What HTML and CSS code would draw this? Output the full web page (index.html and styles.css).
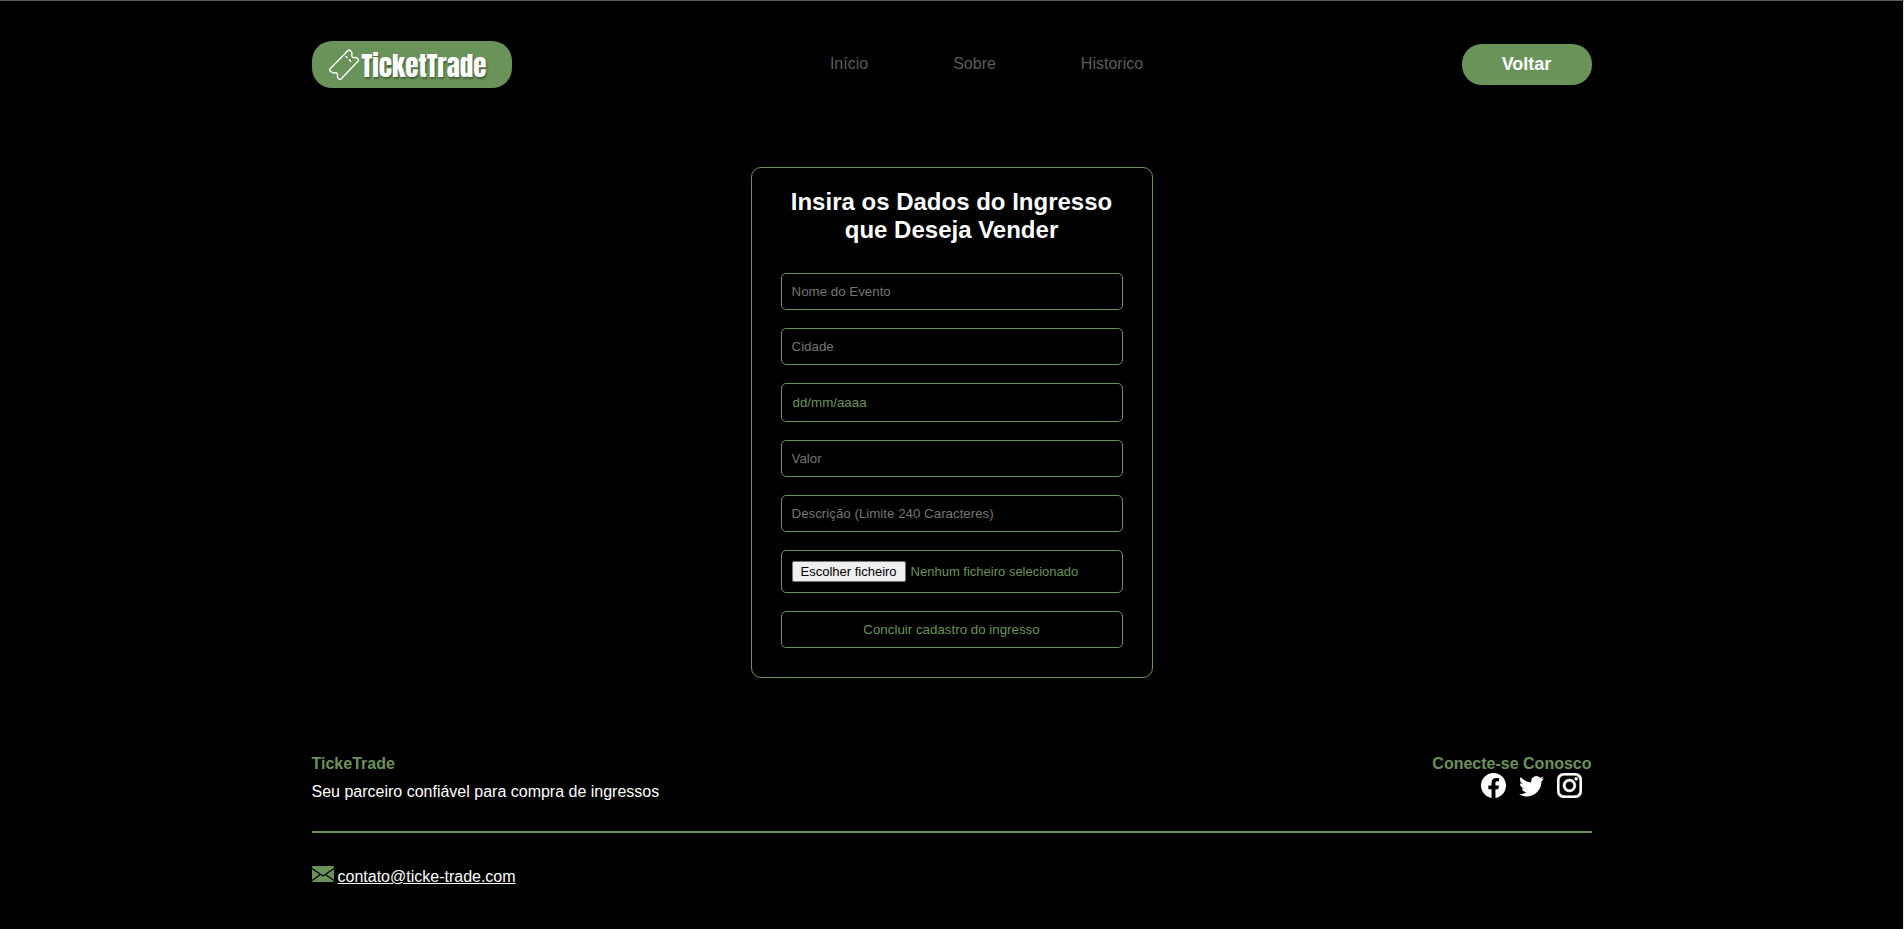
FILE: index.html
```
<!DOCTYPE html>
<html lang="pt">
<head>
<meta charset="utf-8">
<title>TicketTrade</title>
<meta name="viewport" content="width=device-width, initial-scale=1">
<link rel="stylesheet" href="styles.css">
</head>
<body>
<header class="container header">
  <a class="logo" href="#" aria-label="TicketTrade">
    <svg class="logo-ticket" viewBox="0 0 32 32" aria-hidden="true">
      <path d="M20 1.500q1-1 2 0l1.500 1.500q.8 1 .3 2.200c-.4 2.400 1 4 3.200 3.300q1.200-.2 2 .6l1.200 1.200q.8.800 0 1.700L13 30q-1 1-2 0l-1.200-1.300q-.6-.8-.2-2c.4-2-1-3.200-2.800-2.800q-1.500.4-2.400-.4L2 22q-.8-1 0-2z"/>
      <path class="logo-dash" d="M17.500 7l7 7"/>
    </svg>
    <span class="logo-text">TicketTrade</span>
  </a>
  <nav class="nav">
    <a href="#">Início</a>
    <a href="#">Sobre</a>
    <a href="#">Historico</a>
  </nav>
  <button class="back" type="button">Voltar</button>
</header>

<main class="main">
  <form class="card">
    <h1 class="title">Insira os Dados do Ingresso que Deseja Vender</h1>
    <input class="field" type="text" placeholder="Nome do Evento" aria-label="Nome do Evento">
    <input class="field" type="text" placeholder="Cidade" aria-label="Cidade">
    <input class="field field-date" type="text" placeholder="dd/mm/aaaa" aria-label="Data do evento">
    <input class="field" type="text" placeholder="Valor" aria-label="Valor">
    <input class="field" type="text" maxlength="240" placeholder="Descrição (Limite 240 Caracteres)" aria-label="Descrição">
    <label class="field field-file">
      <input class="file-input" type="file">
      <span class="file-button">Escolher ficheiro</span>
      <span>Nenhum ficheiro selecionado</span>
    </label>
    <button class="field submit" type="submit">Concluir cadastro do ingresso</button>
  </form>
</main>

<footer class="container footer">
  <div class="footer-top">
    <div class="about">
      <h2 class="footer-title">TickeTrade</h2>
      <p class="slogan">Seu parceiro confiável para compra de ingressos</p>
    </div>
    <div class="social">
      <h2 class="footer-title">Conecte-se Conosco</h2>
      <div class="social-links">
        <a href="#" aria-label="Facebook"><svg viewBox="0 0 16 16"><path d="M16 8.049c0-4.446-3.582-8.050-8-8.050C3.580 0-.002 3.603-.002 8.050c0 4.017 2.926 7.347 6.750 7.951v-5.625h-2.030V8.050H6.750V6.275c0-2.017 1.195-3.131 3.022-3.131.876 0 1.791.157 1.791.157v1.980h-1.009c-.993 0-1.303.621-1.303 1.258v1.510h2.218l-.354 2.326H9.250V16c3.824-.604 6.750-3.934 6.750-7.951"/></svg></a>
        <a href="#" aria-label="Twitter"><svg viewBox="0 0 16 16"><path d="M5.026 15c6.038 0 9.341-5.003 9.341-9.334 0-.140 0-.282-.006-.422A6.700 6.700 0 0 0 16 3.542a6.700 6.700 0 0 1-1.889.518 3.300 3.300 0 0 0 1.447-1.817 6.500 6.500 0 0 1-2.087.793A3.286 3.286 0 0 0 7.875 6.030a9.320 9.320 0 0 1-6.767-3.429 3.290 3.290 0 0 0 1.018 4.382A3.300 3.300 0 0 1 .64 6.575v.045a3.290 3.290 0 0 0 2.632 3.218 3.200 3.200 0 0 1-.865.115 3 3 0 0 1-.614-.057 3.280 3.280 0 0 0 3.067 2.277A6.600 6.600 0 0 1 .78 13.580a6 6 0 0 1-.78-.045A9.340 9.340 0 0 0 5.026 15"/></svg></a>
        <a href="#" aria-label="Instagram"><svg class="instagram" viewBox="0 0 16 16"><path d="M8 0C5.829 0 5.556.010 4.703.048 3.850.088 3.269.222 2.760.420a3.900 3.900 0 0 0-1.417.923A3.900 3.900 0 0 0 .420 2.760C.222 3.268.087 3.850.048 4.700.010 5.555 0 5.827 0 8.001c0 2.172.010 2.444.048 3.297.040.852.174 1.433.372 1.942.205.526.478.972.923 1.417.444.445.890.719 1.416.923.510.198 1.090.333 1.942.372C5.555 15.990 5.827 16 8 16s2.444-.010 3.298-.048c.851-.040 1.434-.174 1.943-.372a3.900 3.900 0 0 0 1.416-.923c.445-.445.718-.891.923-1.417.197-.509.332-1.090.372-1.942C15.990 10.445 16 10.173 16 8s-.010-2.445-.048-3.299c-.040-.851-.175-1.433-.372-1.941a3.900 3.900 0 0 0-.923-1.417A3.900 3.900 0 0 0 13.240.420c-.510-.198-1.092-.333-1.943-.372C10.443.010 10.172 0 7.998 0zm-.717 1.442h.718c2.136 0 2.389.007 3.232.046.780.035 1.204.166 1.486.275.373.145.640.319.920.599s.453.546.598.920c.110.281.240.705.275 1.485.039.843.047 1.096.047 3.231s-.008 2.389-.047 3.232c-.035.780-.166 1.203-.275 1.485a2.500 2.500 0 0 1-.599.919c-.280.280-.546.453-.920.598-.280.110-.704.240-1.485.276-.843.038-1.096.047-3.232.047s-2.390-.009-3.233-.047c-.780-.036-1.203-.166-1.485-.276a2.500 2.500 0 0 1-.920-.598 2.500 2.500 0 0 1-.600-.920c-.109-.281-.240-.705-.275-1.485-.038-.843-.046-1.096-.046-3.233s.008-2.388.046-3.231c.036-.780.166-1.204.276-1.486.145-.373.319-.640.599-.920s.546-.453.920-.598c.282-.110.705-.240 1.485-.276.738-.034 1.024-.044 2.515-.045zm4.988 1.328a.960.960 0 1 0 0 1.920.960.960 0 0 0 0-1.920m-4.270 1.122a4.109 4.109 0 1 0 0 8.217 4.109 4.109 0 0 0 0-8.217m0 1.441a2.667 2.667 0 1 1 0 5.334 2.667 2.667 0 0 1 0-5.334"/></svg></a>
      </div>
    </div>
  </div>
  <div class="contact">
    <svg class="mail" viewBox="0 0 22 16" aria-hidden="true">
      <rect width="22" height="16" rx="1"/>
      <path d="M0 2.500l11 7.500 11-7.500M0 14.500l8.500-6M22 14.500l-8.500-6"/>
    </svg>
    <a href="mailto:contato@ticke-trade.com">contato@ticke-trade.com</a>
  </div>
</footer>
</body>
</html>
```
FILE: styles.css
```
:root {
  --green: #6a9359;
}

* {
  box-sizing: border-box;
  margin: 0;
}

body {
  min-height: 100vh;
  background: #000;
  border-top: 1px solid #5a5b5e;
  border-right: 1px solid #e8e8e8;
  color: #fff;
  font: 16px/18px "Liberation Sans", Arial, sans-serif;
}

.container {
  width: 100%;
  max-width: 1312px;
  margin: 0 auto;
  padding: 0 16px;
}

.header {
  display: flex;
  justify-content: space-between;
  align-items: center;
  padding-top: 40px;
}

.logo {
  display: flex;
  align-items: center;
  gap: 2px;
  width: 200px;
  height: 47px;
  padding-left: 16px;
  border-radius: 20px;
  background: var(--green);
  color: #fff;
  text-decoration: none;
}

.logo-ticket {
  flex: none;
  width: 32px;
  height: 32px;
  fill: none;
  stroke: #fff;
  stroke-width: 1.4;
  stroke-linejoin: round;
}

.logo-dash {
  stroke-dasharray: 3 2;
}

.logo-text {
  padding-top: 2px;
  font: 400 27px/32px Impact, Anton, Roboto, "Liberation Sans", sans-serif;
  text-shadow: 1px 2px 2px rgb(0 0 0 / 35%);
}

.nav {
  display: flex;
  gap: 85px;
  padding-bottom: 2px;
}

.nav a {
  color: #5c5c5c;
  text-decoration: none;
}

.back {
  width: 130px;
  height: 41px;
  padding-bottom: 3px;
  border: 0;
  border-radius: 20px;
  background: var(--green);
  color: #fff;
  font: bold 18px/20px "Liberation Sans", Arial, sans-serif;
}

.main {
  display: flex;
  justify-content: center;
  padding: 79px 16px 77px;
}

.card {
  display: flex;
  flex-direction: column;
  gap: 18px;
  width: 402px;
  padding: 20px 29px 29px;
  border: 1px solid var(--green);
  border-radius: 10px;
}

.title {
  margin-bottom: 11px;
  font-size: 24px;
  line-height: 28px;
  text-align: center;
}

.field {
  width: 100%;
  padding: 10px;
  border: 1px solid var(--green);
  border-radius: 5px;
  background: transparent;
  color: var(--green);
  font-family: "Liberation Sans", Arial, sans-serif;
  line-height: 15px;
}

.field::placeholder {
  color: #757575;
}

.field-date {
  padding: 11px;
}

.field-date::placeholder {
  color: var(--green);
}

.field-file {
  display: flex;
  align-items: center;
  gap: 5px;
  position: relative;
  font-size: 13px;
}

.file-input {
  position: absolute;
  inset: 0;
  opacity: 0;
}

.file-button {
  padding: 2px 8px;
  border: 1px solid #767676;
  border-radius: 2px;
  background: #efefef;
  color: #000;
}

.footer-top {
  display: flex;
  justify-content: space-between;
  padding-bottom: 30px;
  border-bottom: 2px solid var(--green);
}

.footer-title {
  color: var(--green);
  font-size: 16px;
  line-height: 18px;
}

.slogan {
  margin-top: 10px;
}

.social-links {
  display: flex;
  justify-content: flex-end;
  gap: 13px;
  padding-right: 10px;
}

.social-links svg {
  display: block;
  width: 25px;
  height: 25px;
  fill: #fff;
}

.instagram {
  stroke: #fff;
  stroke-width: 0.4;
}

.contact {
  display: flex;
  align-items: baseline;
  gap: 4px;
  padding-top: 33px;
}

.contact a {
  color: #fff;
}

.mail {
  width: 22px;
  height: 16px;
  fill: var(--green);
}

.mail path {
  fill: none;
  stroke: #000;
  stroke-width: 1.2;
}
```
